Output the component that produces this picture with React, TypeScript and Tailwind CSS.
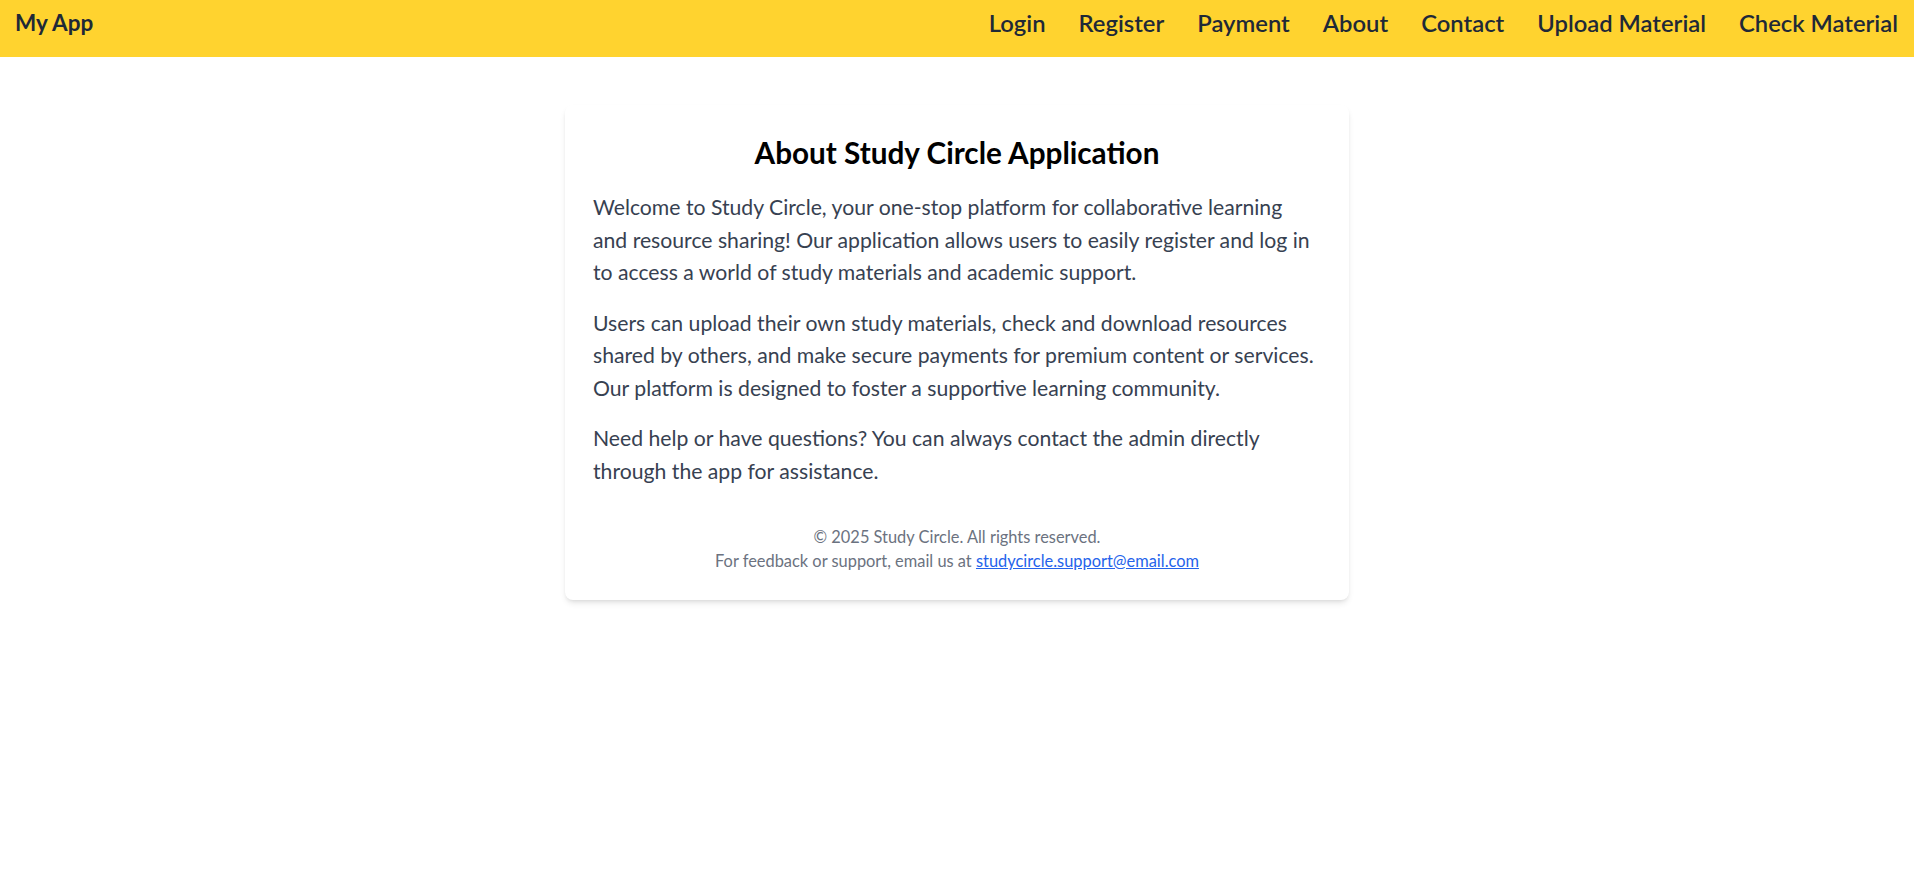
export default function App() {
  const links = ["Login", "Register", "Payment", "About", "Contact", "Upload Material", "Check Material"]
  return (
    <div className="min-h-screen bg-white font-['Lato',sans-serif]">
      <nav className="h-[57px] bg-[#ffd32f] pl-[15px] pr-4 pt-[9px] flex items-start justify-between">
        <span className="text-[22.5px] leading-[28px] font-bold text-[#1f2937]">My App</span>
        <ul className="flex items-center gap-[33px]">
          {links.map((l) => (
            <li key={l}>
              <a href="#" className="text-[23.8px] leading-[28px] font-semibold text-[#1f2937]">
                {l}
              </a>
            </li>
          ))}
        </ul>
      </nav>

      <main className="flex justify-center pt-12">
        <section className="w-[784px] bg-white rounded-lg shadow-md px-7 pt-[30px] pb-7">
          <h1 className="text-[29.7px] leading-[35px] font-bold text-black text-center mb-[21px]">
            About Study Circle Application
          </h1>
          <p className="text-[21.2px] leading-[32.5px] text-[#374151] mb-[18px]">
            Welcome to Study Circle, your one-stop platform for collaborative learning and resource
            sharing! Our application allows users to easily register and log in to access a world of
            study materials and academic support.
          </p>
          <p className="text-[21.2px] leading-[32.5px] text-[#374151] mb-[18px]">
            Users can upload their own study materials, check and download resources shared by
            others, and make secure payments for premium content or services. Our platform is
            designed to foster a supportive learning community.
          </p>
          <p className="text-[21.2px] leading-[32.5px] text-[#374151]">
            Need help or have questions? You can always contact the admin directly through the app
            for assistance.
          </p>
          <footer className="mt-[38px] text-center text-[16.4px] leading-[23.5px] text-[#6b7280]">
            <p>© 2025 Study Circle. All rights reserved.</p>
            <p>
              For feedback or support, email us at{" "}
              <a href="mailto:studycircle.support@email.com" className="text-[#2563eb] underline">
                studycircle.support@email.com
              </a>
            </p>
          </footer>
        </section>
      </main>
    </div>
  )
}
